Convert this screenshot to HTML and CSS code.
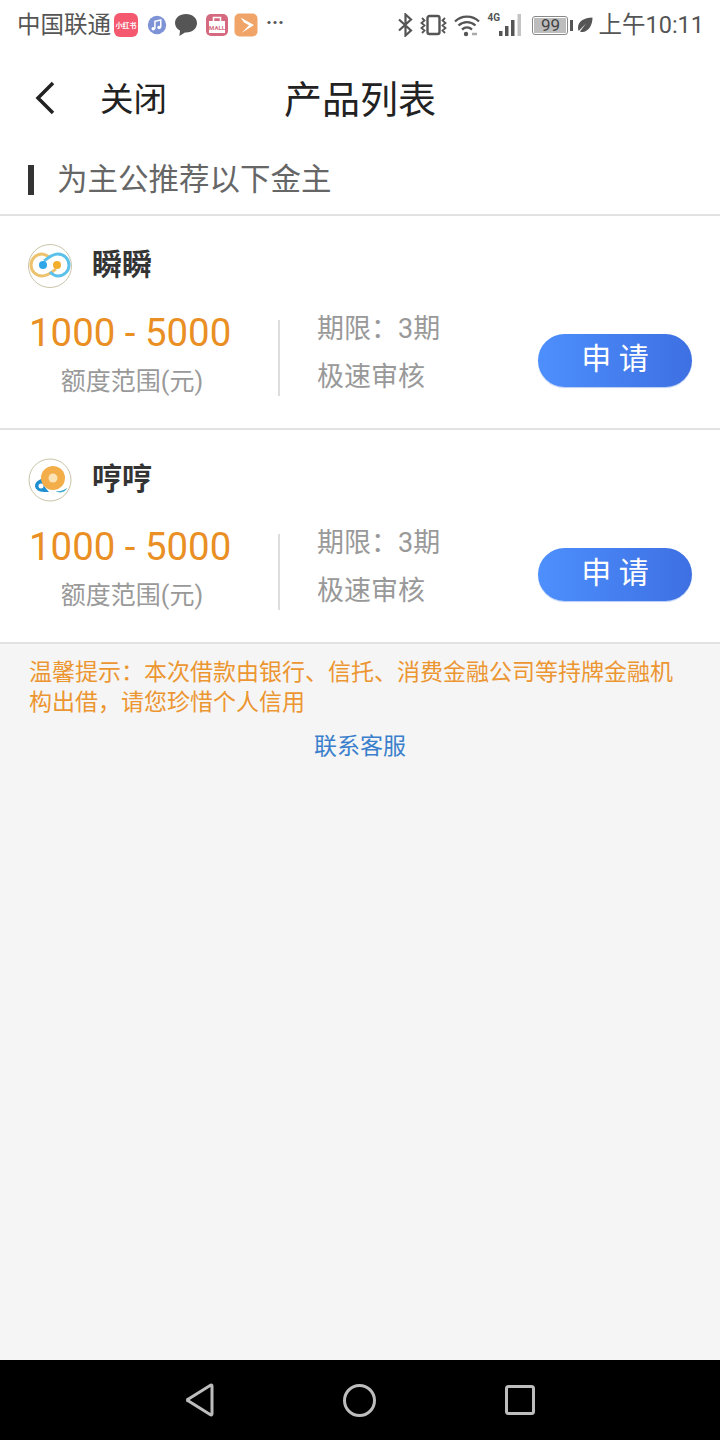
FILE: index.html
```html
<!DOCTYPE html>
<html lang="zh-CN">
<head>
    <meta charset="utf-8">
    <title>产品列表</title>
    <link rel="stylesheet" href="styles.css">
</head>
<body>
    <div class="phone">
        <div class="statusbar">
            <div class="status-left">
                <span class="carrier">中国联通</span>
                <span class="app-icon app-red">小红书</span>
                <svg class="notif-icon music" viewBox="0 0 24 24"><circle cx="12" cy="12" r="11" fill="#7d93d6"/><path d="M9.500 16.500V7.500l7-1.500v9" fill="none" stroke="#fff" stroke-width="1.800"/><circle cx="7.600" cy="16.500" r="2.200" fill="#fff"/><circle cx="14.600" cy="15" r="2.200" fill="#fff"/></svg>
                <svg class="notif-icon chat" viewBox="0 0 24 24"><path d="M12 1C5.500 1 1 4.900 1 10c0 3.300 2 6 5 7.600L5.400 23l5.600-3.600h1c6.500 0 11-4.100 11-9.200S18.500 1 12 1z" fill="#555"/></svg>
                <svg class="notif-icon shop" viewBox="0 0 24 24"><rect x="1" y="1" width="22" height="22" rx="5" fill="#d5697f"/><path d="M4 8h16v12H4z" fill="#fff"/><path d="M8.500 8V4.500h7V8" fill="none" stroke="#fff" stroke-width="1.500"/><text x="12" y="17" text-anchor="middle" class="shop-text">MALL</text></svg>
                <svg class="notif-icon video" viewBox="0 0 24 24"><rect x="0.500" y="0.500" width="23" height="23" rx="5" fill="#f0a468"/><path d="M6.500 4.500L20 12 7.500 20l3-3 4.500-4.800-5-2.700z" fill="#fff"/></svg>
                <span class="dots">···</span>
            </div>
            <div class="status-right">
                <svg class="sys-icon bt" viewBox="0 0 17 24"><path d="M2 6.500l12 11L8.500 22.500V1.500L14 6.500 2 17.500" fill="none" stroke="#555" stroke-width="2.200"/></svg>
                <svg class="sys-icon vib" viewBox="0 0 27 24"><rect x="7.500" y="3" width="12" height="18" rx="2" fill="none" stroke="#555" stroke-width="2.400"/><path d="M2 5l2.500 2.500L1.500 10 4.500 12.500 1.500 15 4.500 17.500 2 20M25 5l-2.500 2.500 3 2.500-3 2.500 3 2.500-3 2.500 2.500 2.500" fill="none" stroke="#555" stroke-width="1.800"/></svg>
                <svg class="sys-icon wifi" viewBox="0 0 26 24"><path d="M1 8.500c6.500-6.500 17.500-6.500 24 0M4.500 12.500c5-4.500 12-4.500 17 0M8 16.500c3-2.500 7-2.500 10 0" fill="none" stroke="#555" stroke-width="2.300"/><circle cx="12" cy="21" r="2.200" fill="#555"/><path d="M18 21h5" stroke="#aaa" stroke-width="2.500"/></svg>
                <span class="net-wrap">
                    <span class="net-label">4G</span>
                    <svg class="sys-icon signal" viewBox="0 0 24 24"><rect x="1" y="18" width="3.500" height="5" fill="#555"/><rect x="7" y="13" width="3.500" height="10" fill="#555"/><rect x="13" y="7" width="3.500" height="16" fill="#555"/><rect x="19.500" y="1" width="3.500" height="22" fill="#c4c4c4"/></svg>
                </span>
                <span class="battery"><span class="battery-level">99</span></span>
                <span class="battery-cap"></span>
                <svg class="sys-icon leaf" viewBox="0 0 16 16"><path d="M15.500 .5C7 1 1 4 1 11c0 1 .3 2 .7 3L9 6.500 3 14.500c1 .5 2 .7 3 .5C12 14 15.500 8 15.500 .5z" fill="#555"/></svg>
                <span class="clock">上午10:11</span>
            </div>
        </div>

        <div class="navbar">
            <svg class="back-icon" viewBox="0 0 24 36"><path d="M20 3L5 18l15 15" fill="none" stroke="#222" stroke-width="3.500"/></svg>
            <span class="close-text">关闭</span>
            <span class="nav-title">产品列表</span>
        </div>

        <div class="section-head">
            <span class="section-mark"></span>
            <span class="section-text">为主公推荐以下金主</span>
        </div>

        <div class="product">
            <div class="product-head">
                <svg class="logo" viewBox="0 0 44 44">
                    <circle cx="22" cy="22" r="21.500" fill="#fff" stroke="#c9c4a8"/>
                    <path d="M22 14C19 11 16 10 14 10A11 11 0 0 0 14 32C20 32 24 28 28 25" fill="none" stroke="#ecc26c" stroke-width="3"/>
                    <path d="M22 28C25 31 28 32 30 32A11 11 0 0 0 30 10C24 10 20 14 16 17" fill="none" stroke="#5cc1ea" stroke-width="3"/>
                    <circle cx="15" cy="21" r="4" fill="#2fa6e8"/>
                    <circle cx="29" cy="21" r="4" fill="#f3ae2e"/>
                </svg>
                <span class="product-name">瞬瞬</span>
            </div>
            <div class="product-body">
                <div class="amount">
                    <div class="amount-value">1000 - 5000</div>
                    <div class="amount-label">额度范围(元)</div>
                </div>
                <div class="terms">
                    <div>期限：3期</div>
                    <div>极速审核</div>
                </div>
                <button class="apply">申 请</button>
            </div>
        </div>

        <div class="product">
            <div class="product-head">
                <svg class="logo" viewBox="0 0 44 44">
                    <circle cx="22" cy="22" r="21" fill="#fff" stroke="#c9c4a8"/>
                    <path d="M14 21c-4 .500-7 4-7 7s4 6 9 6h5c-3-3-6-7-7-13z" fill="#1f8fd0"/>
                    <circle cx="25" cy="20" r="12" fill="#f3ae4a"/>
                    <circle cx="25" cy="20" r="4.500" fill="#fbe3b5"/>
                    <circle cx="13" cy="28" r="2.500" fill="#fff"/>
                    <path d="M28 33c4 .500 8-.500 11-3-1 4-8 6-11 3z" fill="#3aa7c9"/>
                </svg>
                <span class="product-name">哼哼</span>
            </div>
            <div class="product-body">
                <div class="amount">
                    <div class="amount-value">1000 - 5000</div>
                    <div class="amount-label">额度范围(元)</div>
                </div>
                <div class="terms">
                    <div>期限：3期</div>
                    <div>极速审核</div>
                </div>
                <button class="apply">申 请</button>
            </div>
        </div>

        <div class="content">
            <p class="tip">温馨提示：本次借款由银行、信托、消费金融公司等持牌金融机构出借，请您珍惜个人信用</p>
            <a class="service">联系客服</a>
        </div>

        <div class="softkeys">
            <svg class="softkey key-back" viewBox="0 0 28 34"><path d="M26 3v28a1 1 0 0 1-1.500.8L2.500 18a1 1 0 0 1 0-2L24.500 2.200A1 1 0 0 1 26 3z" fill="none" stroke="#bdbdbd" stroke-width="3"/></svg>
            <svg class="softkey key-home" viewBox="0 0 33 33"><circle cx="16.500" cy="16.500" r="15" fill="none" stroke="#bdbdbd" stroke-width="3"/></svg>
            <svg class="softkey key-recent" viewBox="0 0 30 30"><rect x="1.500" y="1.500" width="27" height="27" rx="2" fill="none" stroke="#bdbdbd" stroke-width="3"/></svg>
        </div>
    </div>
</body>
</html>
```

FILE: styles.css
```css
html, body {
    margin: 0;
    padding: 0;
    width: 100%;
    height: 100%;
    overflow: hidden;
}
body {
    font-family: Roboto, "Noto Sans CJK SC", sans-serif;
    background: #fff;
}
.phone {
    display: flex;
    flex-direction: column;
    width: 720px;
    height: 1440px;
}
.statusbar {
    display: flex;
    justify-content: space-between;
    align-items: center;
    height: 50px;
    padding: 0 16px 0 17px;
    flex-shrink: 0;
}
.status-left, .status-right {
    display: flex;
    align-items: center;
}
.carrier {
    margin-top: -4px;
    margin-right: 1px;
    font-size: 23.500px;
    color: #555;
}
.app-icon {
    display: flex;
    align-items: center;
    justify-content: center;
    width: 24px;
    height: 24px;
    margin-left: 2px;
    border-radius: 6px;
    background: #f4596f;
    color: #fff;
    font-size: 7px;
    font-weight: bold;
    white-space: nowrap;
}
.notif-icon {
    width: 24px;
    height: 24px;
    margin-left: 7px;
}
.music {
    width: 20px;
    height: 20px;
    margin-left: 9px;
}
.shop-text {
    font-size: 6px;
    font-weight: bold;
    fill: #d5697f;
}
.video {
    margin-left: 5px;
}
.dots {
    margin-left: 8px;
    margin-top: -6px;
    color: #555;
    font-size: 20px;
    font-weight: bold;
}
.sys-icon {
    display: block;
}
.bt {
    width: 17px;
    height: 24px;
}
.vib {
    width: 27px;
    height: 24px;
    margin-left: 6px;
}
.wifi {
    width: 26px;
    height: 24px;
    margin-left: 7px;
}
.net-wrap {
    position: relative;
    width: 35px;
    height: 24px;
    margin-left: 7px;
}
.net-label {
    position: absolute;
    top: -1px;
    left: 0;
    font-size: 10px;
    font-weight: bold;
    color: #555;
}
.signal {
    position: absolute;
    right: 0;
    top: 0;
    width: 24px;
    height: 24px;
}
.battery {
    display: flex;
    align-items: center;
    justify-content: center;
    box-sizing: border-box;
    width: 36px;
    height: 19px;
    margin-left: 10px;
    border: 1px solid #888;
    border-radius: 3px;
    padding: 1px;
}
.battery-level {
    display: block;
    width: 100%;
    background: #bdbdbd;
    color: #444;
    font-size: 17px;
    line-height: 15px;
    text-align: center;
}
.battery-cap {
    width: 3px;
    height: 11px;
    margin-left: 2px;
    background: #555;
}
.leaf {
    width: 16px;
    height: 16px;
    margin-left: 4px;
}
.clock {
    margin-left: 5px;
    margin-top: -4px;
    font-size: 23.500px;
    color: #555;
}
.navbar {
    position: relative;
    display: flex;
    align-items: center;
    box-sizing: border-box;
    height: 100px;
    padding: 0 0 4px 33px;
    flex-shrink: 0;
}
.back-icon {
    width: 24px;
    height: 36px;
}
.close-text {
    margin-left: 43px;
    margin-top: -4px;
    font-size: 33.500px;
    color: #222;
}
.nav-title {
    position: absolute;
    left: 0;
    right: 0;
    margin-top: -4px;
    text-align: center;
    font-size: 38px;
    color: #222;
}
.section-head {
    display: flex;
    align-items: center;
    box-sizing: content-box;
    height: 60px;
    padding-bottom: 4px;
    padding-left: 28px;
    border-bottom: 2px solid #e2e2e2;
    flex-shrink: 0;
}
.section-mark {
    width: 6px;
    height: 30px;
    background: #333;
}
.section-text {
    margin-left: 23px;
    margin-top: -6px;
    font-size: 30.500px;
    color: #666;
}
.product {
    box-sizing: border-box;
    height: 214px;
    padding: 28px 28px 0;
    border-bottom: 2px solid #e2e2e2;
    flex-shrink: 0;
}
.product-head {
    display: flex;
    align-items: center;
    height: 44px;
}
.logo {
    width: 44px;
    height: 44px;
}
.product-name {
    margin-left: 20px;
    margin-top: -9px;
    font-size: 30px;
    font-weight: bold;
    color: #333;
}
.product-body {
    display: flex;
    align-items: flex-start;
    margin-top: 20px;
}
.amount {
    box-sizing: border-box;
    width: 252px;
    height: 76px;
    margin-top: 12px;
    border-right: 2px solid #ddd;
}
.amount-value {
    width: 204px;
    margin-top: -11px;
    padding-left: 1px;
    font-size: 38.400px;
    line-height: 48px;
    color: #e98f24;
    white-space: nowrap;
}
.amount-label {
    width: 208px;
    margin-top: 7px;
    font-size: 25px;
    line-height: 36px;
    text-align: center;
    color: #999;
}
.terms {
    margin-left: 37px;
    margin-top: -3px;
    font-size: 27px;
    line-height: 48px;
    color: #999;
    width: 221px;
}
.apply {
    width: 154px;
    height: 53px;
    margin-top: 26px;
    padding: 0 0 10px;
    border: none;
    border-radius: 27px;
    background: linear-gradient(90deg, #4d8ffd, #3e70e2);
    box-shadow: 0 1px 1px #b9cdf5;
    color: #fff;
    font-family: inherit;
    font-size: 30px;
}
.content {
    flex: 1;
    padding: 14px 29px 0;
    background: #f5f5f5;
}
.tip {
    margin: 0;
    font-size: 23px;
    line-height: 30px;
    color: #ec9632;
}
.service {
    display: block;
    margin-top: 14px;
    text-align: center;
    font-size: 23px;
    line-height: 30px;
    color: #3a7fcb;
}
.softkeys {
    display: flex;
    justify-content: center;
    align-items: center;
    gap: 129px;
    height: 80px;
    background: #000;
    flex-shrink: 0;
}
.key-back {
    width: 28px;
    height: 34px;
}
.key-home {
    width: 33px;
    height: 33px;
}
.key-recent {
    width: 30px;
    height: 30px;
}
```
